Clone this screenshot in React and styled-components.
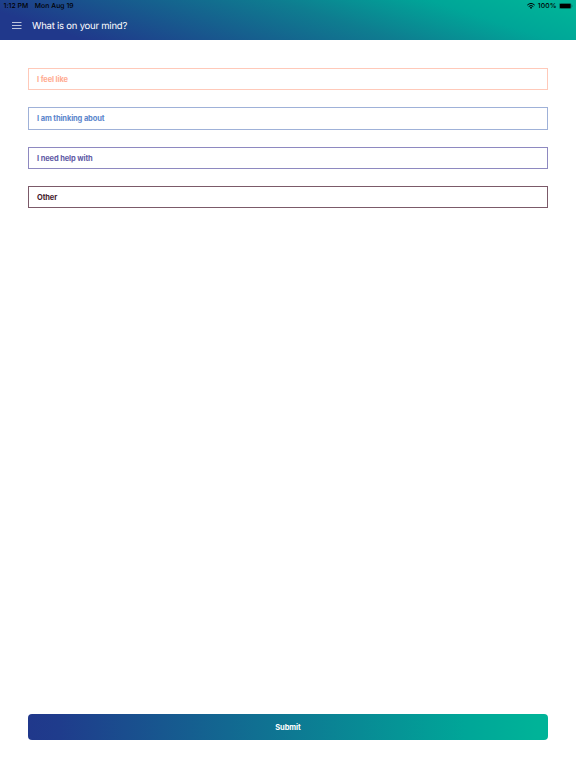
import React from "react";
import styled, { createGlobalStyle } from "styled-components";

const Global = createGlobalStyle`
  * { box-sizing: border-box; }
  body {
    margin: 0; background: #fff; font-family: Inter, sans-serif;
    text-rendering: geometricPrecision; -webkit-font-smoothing: antialiased;
  }
`;
const Page = styled.div`
  display: flex; flex-direction: column; height: 100vh;
`;
const Header = styled.header`
  height: 39.6px; flex: none;
  background: linear-gradient(18deg, #20388b 0%, #20388b 12%, #0e7d90 57%, #00a698 79%, #00b398 95%);
`;
const StatusBar = styled.div`
  height: 12px; display: flex; align-items: center; padding: 0 3px 0 3.5px;
  font-size: 6.8px; line-height: 12px; font-weight: 500; color: #000; letter-spacing: 0.07px;
`;
const DateText = styled.span`margin-left: 6.5px;`;
const StatusRight = styled.div`
  margin-left: auto; display: flex; align-items: center; gap: 2.5px;
`;
const TitleBar = styled.div`
  height: 27.6px; display: flex; align-items: center; padding-left: 11.5px; gap: 10.5px; color: #fff;
`;
const Title = styled.h1`
  margin: 0; padding-top: 2px; font-size: 9.5px; font-weight: 400; line-height: 14px; letter-spacing: -0.22px;
`;
const Options = styled.main`
  flex: 1; display: flex; flex-direction: column; gap: 17.1px; padding: 28.4px 28px 0;
`;
const Option = styled.button`
  height: 22.3px; padding: 0.4px 8px 0; text-align: left; background: #fff;
  border: 1px solid ${(p) => p.$border}; color: ${(p) => p.$color};
  font: 700 7.5px/19px Inter, sans-serif; letter-spacing: -0.12px;
`;
const Submit = styled.button`
  height: 26px; margin: 0 28px 28px; border: 0; border-radius: 4px; color: #fff;
  font: 700 7.5px/26px Inter, sans-serif; letter-spacing: -0.05px;
  background: linear-gradient(to right, #20388b 0%, #1f3c8c 6%, #00a698 84%, #00b398 98%);
`;

const options = [
  { label: "I feel like", color: "#ffab91", border: "#ffc9b9" },
  { label: "I am thinking about", color: "#5b86cc", border: "#9fb1d8" },
  { label: "I need help with", color: "#615ba6", border: "#8e89c0" },
  { label: "Other", color: "#451a2d", border: "#7b5a69" },
];

export default function App() {
  return (
    <Page>
      <Global />
      <Header>
        <StatusBar>
          <span>1:12 PM</span><DateText>Mon Aug 19</DateText>
          <StatusRight>
            <svg width="8" height="6" viewBox="0 0 8 6"><path d="M.3 2.1Q4-1.2 7.7 2.1M1.7 3.5Q4 1.5 6.3 3.5" fill="none" stroke="#000" /><path d="M2.8 4.6Q4 3.5 5.2 4.6L4 5.9Z" /></svg>
            <span>100%</span>
            <svg width="14" height="6" viewBox="0 0 14 6"><rect x=".25" y=".25" width="12" height="5.5" rx="1.3" fill="none" stroke="#000" strokeOpacity=".4" strokeWidth=".5" /><rect x=".8" y=".8" width="10.9" height="4.4" rx=".8" /><path d="M12.8 2v2q.8-.3.8-1t-.8-1" opacity=".4" /></svg>
          </StatusRight>
        </StatusBar>
        <TitleBar>
          <svg width="10" height="7"><path d="M0 .5h9.5M0 3.5h9.5M0 6.5h9.5" stroke="#fff" strokeWidth=".7" /></svg>
          <Title>What is on your mind?</Title>
        </TitleBar>
      </Header>
      <Options>
        {options.map((o) => <Option key={o.label} $color={o.color} $border={o.border}>{o.label}</Option>)}
      </Options>
      <Submit>Submit</Submit>
    </Page>
  );
}
